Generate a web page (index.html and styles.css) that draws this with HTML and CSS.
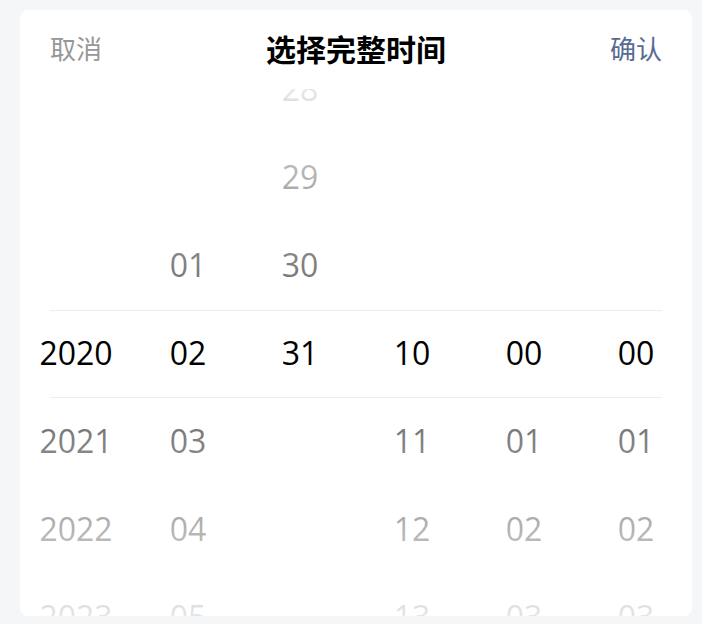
FILE: index.html
```html
<!DOCTYPE html>
<html lang="zh-CN">
<head>
<meta charset="utf-8">
<title>选择完整时间</title>
<link rel="stylesheet" href="styles.css">
</head>
<body>
<div class="picker">
  <div class="toolbar">
    <button class="btn cancel">取消</button>
    <div class="title">选择完整时间</div>
    <button class="btn confirm">确认</button>
  </div>
  <div class="columns">
    <ul class="column">
      <li></li><li></li><li></li><li>2020</li><li>2021</li><li>2022</li><li>2023</li>
    </ul>
    <ul class="column">
      <li></li><li></li><li>01</li><li>02</li><li>03</li><li>04</li><li>05</li>
    </ul>
    <ul class="column">
      <li>28</li><li>29</li><li>30</li><li>31</li><li></li><li></li><li></li>
    </ul>
    <ul class="column">
      <li></li><li></li><li></li><li>10</li><li>11</li><li>12</li><li>13</li>
    </ul>
    <ul class="column">
      <li></li><li></li><li></li><li>00</li><li>01</li><li>02</li><li>03</li>
    </ul>
    <ul class="column">
      <li></li><li></li><li></li><li>00</li><li>01</li><li>02</li><li>03</li>
    </ul>
    <div class="mask"></div>
    <div class="frame"></div>
  </div>
</div>
</body>
</html>
```

FILE: styles.css
```css
html, body {
  margin: 0;
  padding: 0;
  background: #f5f6f8;
  height: 100%;
  overflow: hidden;
}

.picker {
  margin: 10px 10px 0 20px;
  height: 606px;
  background: #fff;
  border-radius: 8px;
  overflow: hidden;
  display: flex;
  flex-direction: column;
}

.toolbar {
  height: 79px;
  flex: none;
  display: flex;
  align-items: center;
  justify-content: space-between;
  padding: 0 30px 4px 30px;
  box-sizing: border-box;
  font-family: "Noto Sans CJK SC", "Noto Sans", sans-serif;
}

.btn {
  border: 0;
  background: none;
  padding: 0;
  font-family: inherit;
  font-size: 26px;
  line-height: 36px;
  cursor: pointer;
}

.cancel { color: #969799; }
.confirm { color: #576b95; }

.title {
  font-size: 30px;
  font-weight: 700;
  color: #000;
  line-height: 40px;
}

.columns {
  position: relative;
  flex: none;
  height: 528px;
  display: flex;
  overflow: hidden;
}

.column {
  flex: 1;
  list-style: none;
  margin: -45px 0 0 0;
  padding: 0;
  display: flex;
  flex-direction: column;
}

.column li {
  height: 88px;
  flex: none;
  display: flex;
  align-items: center;
  justify-content: center;
  font-family: "Open Sans", "DejaVu Sans", sans-serif;
  font-size: 32px;
  color: #000;
}

.mask {
  position: absolute;
  inset: 0;
  pointer-events: none;
  background-image:
    linear-gradient(180deg, rgba(255,255,255,0.9), rgba(255,255,255,0.4)),
    linear-gradient(0deg, rgba(255,255,255,0.9), rgba(255,255,255,0.4));
  background-repeat: no-repeat;
  background-position: top, bottom;
  background-size: 100% 220px;
}

.frame {
  position: absolute;
  left: 30px;
  right: 30px;
  top: 221px;
  height: 88px;
  box-sizing: border-box;
  border-top: 1px solid #ebedf0;
  border-bottom: 1px solid #ebedf0;
  pointer-events: none;
}
```
